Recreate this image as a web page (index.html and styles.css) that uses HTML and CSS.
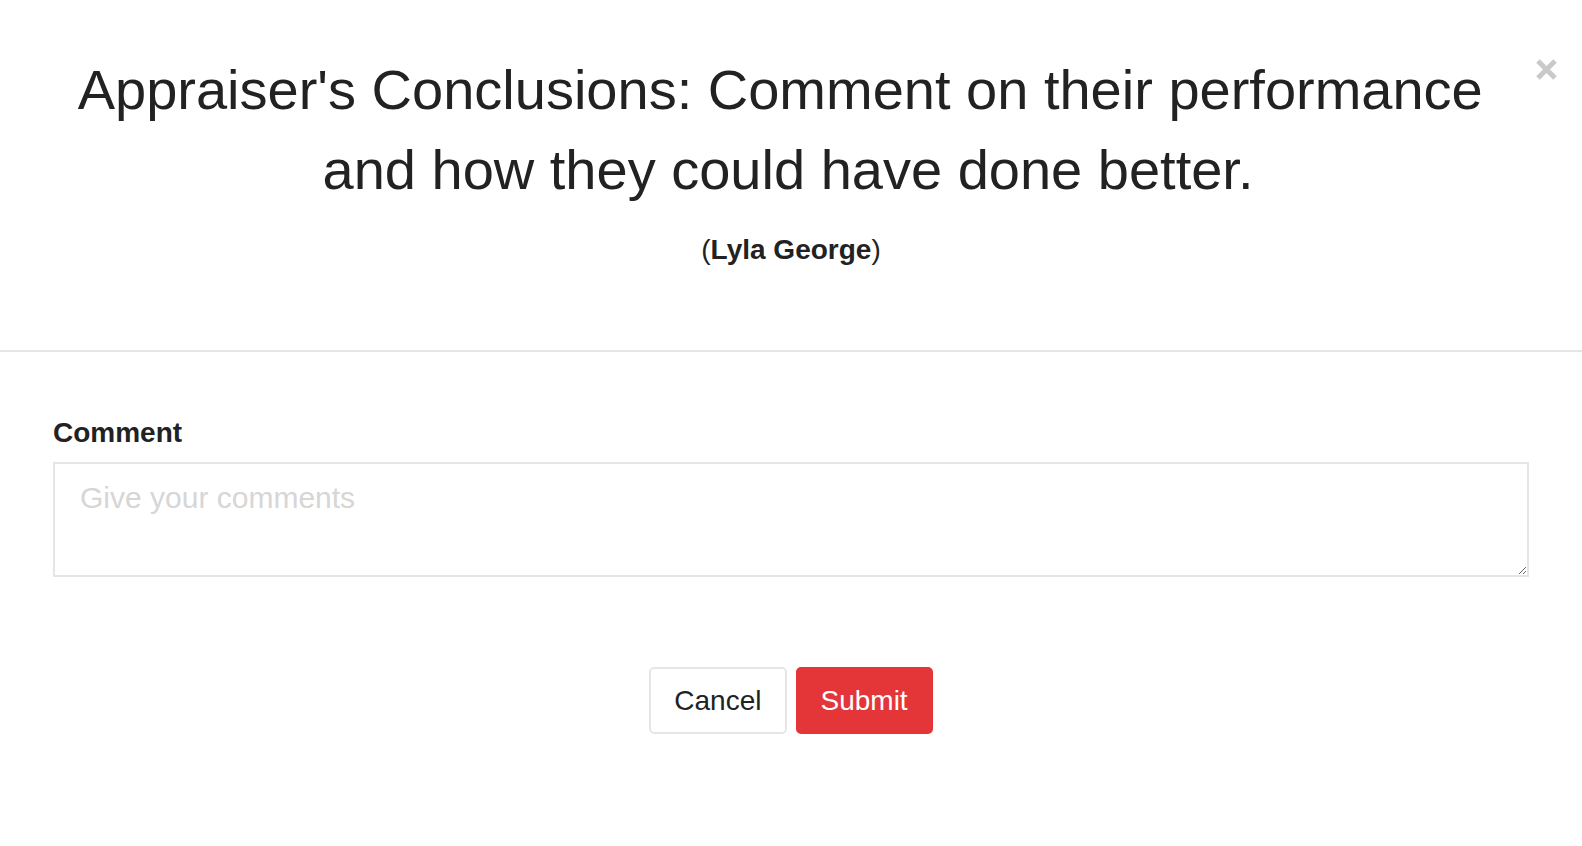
FILE: index.html
```html
<!DOCTYPE html>
<html lang="en">
<head>
<meta charset="utf-8">
<title>Appraiser's Conclusions</title>
<link rel="stylesheet" href="styles.css">
</head>
<body>
<div class="modal">
  <div class="modal-header">
    <button class="close" type="button" aria-label="Close">
      <svg width="23" height="23" viewBox="0 0 23 23"><path d="M3 3 L20 20 M20 3 L3 20" stroke="#c9c9c9" stroke-width="5" stroke-linecap="butt"/></svg>
    </button>
    <h1 class="title">Appraiser's Conclusions: Comment on their performance and how they could have done better.</h1>
    <p class="appraisee">(<b>Lyla George</b>)</p>
  </div>
  <div class="modal-body">
    <label class="field-label" for="comment">Comment</label>
    <textarea id="comment" class="field-input" placeholder="Give your comments"></textarea>
    <div class="actions">
      <button class="btn btn-default" type="button">Cancel</button>
      <button class="btn btn-primary" type="button">Submit</button>
    </div>
  </div>
</div>
</body>
</html>
```
FILE: styles.css
```css
html, body {
  margin: 0;
  padding: 0;
  background: #fff;
}
body {
  font-family: "Liberation Sans", Arial, Helvetica, sans-serif;
  color: #222;
}
.modal {
  width: 100%;
}
.modal-header {
  position: relative;
  padding: 50px 0 80px;
  border-bottom: 2px solid #e5e5e5;
}
.close {
  position: absolute;
  top: 58px;
  right: 24px;
  padding: 0;
  margin: 0;
  border: 0;
  background: transparent;
  width: 23px;
  height: 23px;
  line-height: 0;
  cursor: pointer;
}
.title {
  margin: 0;
  padding: 0 60px 0 54px;
  font-size: 56px;
  line-height: 80px;
  font-weight: 400;
  text-align: center;
  white-space: break-spaces;
  color: #222;
}
.appraisee {
  margin: 20px 0 0;
  font-size: 28px;
  line-height: 40px;
  text-align: center;
  font-weight: 400;
}
.appraisee b {
  font-weight: 700;
}
.modal-body {
  padding: 61px 53px 0;
}
.field-label {
  display: block;
  font-size: 28px;
  line-height: 40px;
  font-weight: 700;
  color: #222;
}
.field-input {
  display: block;
  box-sizing: border-box;
  width: 100%;
  height: 115px;
  margin-top: 9px;
  padding: 14px 25px;
  border: 2px solid #e5e5e5;
  border-radius: 0;
  font-family: "Liberation Sans", Arial, Helvetica, sans-serif;
  font-size: 30px;
  line-height: 40px;
  color: #222;
  outline: none;
  resize: vertical;
}
.field-input::placeholder {
  color: #d6d6d6;
}
.actions {
  display: flex;
  justify-content: center;
  gap: 9px;
  margin-top: 90px;
}
.btn {
  font-family: "Liberation Sans", Arial, Helvetica, sans-serif;
  font-size: 28px;
  line-height: 33px;
  padding: 15px 23px;
  border-radius: 5px;
  border: 2px solid #e6e6e6;
  background: #fff;
  color: #222;
  cursor: pointer;
}
.btn-primary {
  background: #e43639;
  border-color: #e43639;
  color: #fff;
}
```
